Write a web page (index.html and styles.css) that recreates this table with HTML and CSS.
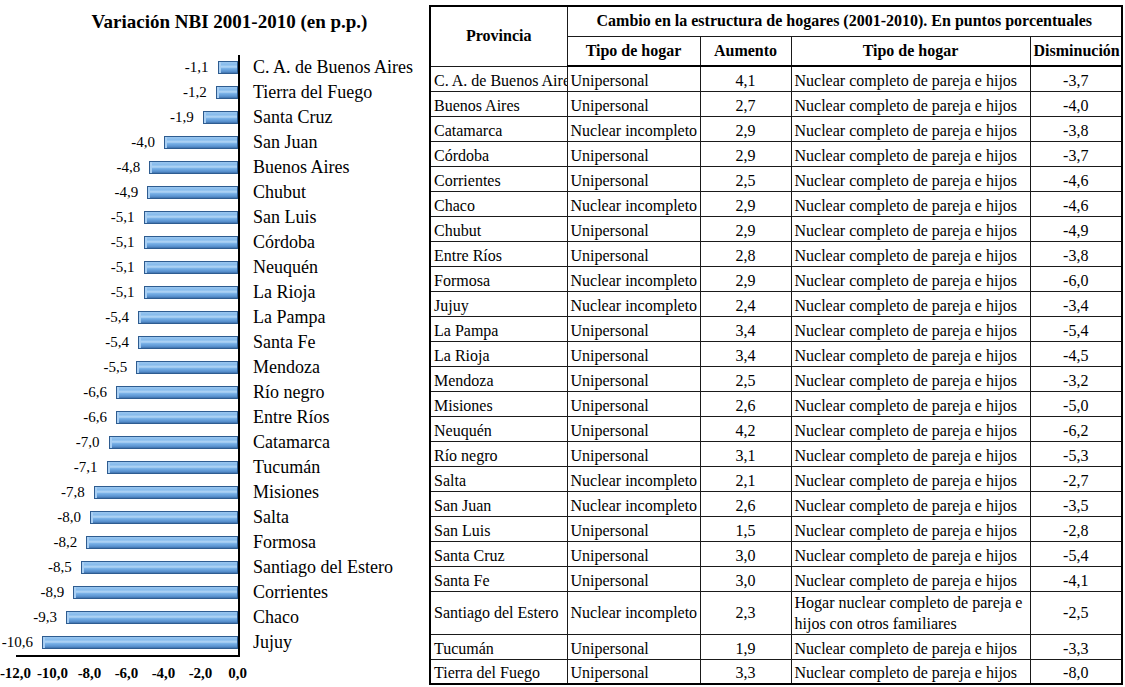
FILE: index.html
```html
<!DOCTYPE html>
<html lang="es">
<head>
<meta charset="utf-8">
<title>Variación NBI 2001-2010</title>
<link rel="stylesheet" href="styles.css">
</head>
<body>
<div class="page">
  <section class="chart">
    <h2 class="chart-title">Variación NBI 2001-2010 (en p.p.)</h2>
    <div class="plot">
      <div class="bars">
        <div class="row"><span class="val">-1,1</span><span class="bar" style="width:20.4px"></span></div>
        <div class="row"><span class="val">-1,2</span><span class="bar" style="width:22.2px"></span></div>
        <div class="row"><span class="val">-1,9</span><span class="bar" style="width:35.2px"></span></div>
        <div class="row"><span class="val">-4,0</span><span class="bar" style="width:74px"></span></div>
        <div class="row"><span class="val">-4,8</span><span class="bar" style="width:88.8px"></span></div>
        <div class="row"><span class="val">-4,9</span><span class="bar" style="width:90.7px"></span></div>
        <div class="row"><span class="val">-5,1</span><span class="bar" style="width:94.4px"></span></div>
        <div class="row"><span class="val">-5,1</span><span class="bar" style="width:94.4px"></span></div>
        <div class="row"><span class="val">-5,1</span><span class="bar" style="width:94.4px"></span></div>
        <div class="row"><span class="val">-5,1</span><span class="bar" style="width:94.4px"></span></div>
        <div class="row"><span class="val">-5,4</span><span class="bar" style="width:99.9px"></span></div>
        <div class="row"><span class="val">-5,4</span><span class="bar" style="width:99.9px"></span></div>
        <div class="row"><span class="val">-5,5</span><span class="bar" style="width:101.8px"></span></div>
        <div class="row"><span class="val">-6,6</span><span class="bar" style="width:122.1px"></span></div>
        <div class="row"><span class="val">-6,6</span><span class="bar" style="width:122.1px"></span></div>
        <div class="row"><span class="val">-7,0</span><span class="bar" style="width:129.5px"></span></div>
        <div class="row"><span class="val">-7,1</span><span class="bar" style="width:131.4px"></span></div>
        <div class="row"><span class="val">-7,8</span><span class="bar" style="width:144.3px"></span></div>
        <div class="row"><span class="val">-8,0</span><span class="bar" style="width:148px"></span></div>
        <div class="row"><span class="val">-8,2</span><span class="bar" style="width:151.7px"></span></div>
        <div class="row"><span class="val">-8,5</span><span class="bar" style="width:157.3px"></span></div>
        <div class="row"><span class="val">-8,9</span><span class="bar" style="width:164.7px"></span></div>
        <div class="row"><span class="val">-9,3</span><span class="bar" style="width:172.1px"></span></div>
        <div class="row"><span class="val">-10,6</span><span class="bar" style="width:196.1px"></span></div>
      </div>
      <ul class="cats">
        <li>C. A. de Buenos Aires</li>
        <li>Tierra del Fuego</li>
        <li>Santa Cruz</li>
        <li>San Juan</li>
        <li>Buenos Aires</li>
        <li>Chubut</li>
        <li>San Luis</li>
        <li>Córdoba</li>
        <li>Neuquén</li>
        <li>La Rioja</li>
        <li>La Pampa</li>
        <li>Santa Fe</li>
        <li>Mendoza</li>
        <li>Río negro</li>
        <li>Entre Ríos</li>
        <li>Catamarca</li>
        <li>Tucumán</li>
        <li>Misiones</li>
        <li>Salta</li>
        <li>Formosa</li>
        <li>Santiago del Estero</li>
        <li>Corrientes</li>
        <li>Chaco</li>
        <li>Jujuy</li>
      </ul>
    </div>
    <div class="xaxis"></div>
    <div class="ticks">
      <span>-12,0</span><span>-10,0</span><span>-8,0</span><span>-6,0</span><span>-4,0</span><span>-2,0</span><span>0,0</span>
    </div>
  </section>

  <table class="data">
    <colgroup>
      <col class="c1"><col class="c2"><col class="c3"><col class="c4"><col class="c5">
    </colgroup>
    <thead>
      <tr class="h1">
        <th rowspan="2">Provincia</th>
        <th colspan="4">Cambio en la estructura de hogares (2001-2010). En puntos porcentuales</th>
      </tr>
      <tr class="h2">
        <th>Tipo de hogar</th>
        <th>Aumento</th>
        <th>Tipo de hogar</th>
        <th>Disminución</th>
      </tr>
    </thead>
    <tbody>
      <tr><td class="prov">C. A. de Buenos Aires</td><td>Unipersonal</td><td class="num">4,1</td><td>Nuclear completo de pareja e hijos</td><td class="num">-3,7</td></tr>
      <tr><td class="prov">Buenos Aires</td><td>Unipersonal</td><td class="num">2,7</td><td>Nuclear completo de pareja e hijos</td><td class="num">-4,0</td></tr>
      <tr><td class="prov">Catamarca</td><td>Nuclear incompleto</td><td class="num">2,9</td><td>Nuclear completo de pareja e hijos</td><td class="num">-3,8</td></tr>
      <tr><td class="prov">Córdoba</td><td>Unipersonal</td><td class="num">2,9</td><td>Nuclear completo de pareja e hijos</td><td class="num">-3,7</td></tr>
      <tr><td class="prov">Corrientes</td><td>Unipersonal</td><td class="num">2,5</td><td>Nuclear completo de pareja e hijos</td><td class="num">-4,6</td></tr>
      <tr><td class="prov">Chaco</td><td>Nuclear incompleto</td><td class="num">2,9</td><td>Nuclear completo de pareja e hijos</td><td class="num">-4,6</td></tr>
      <tr><td class="prov">Chubut</td><td>Unipersonal</td><td class="num">2,9</td><td>Nuclear completo de pareja e hijos</td><td class="num">-4,9</td></tr>
      <tr><td class="prov">Entre Ríos</td><td>Unipersonal</td><td class="num">2,8</td><td>Nuclear completo de pareja e hijos</td><td class="num">-3,8</td></tr>
      <tr><td class="prov">Formosa</td><td>Nuclear incompleto</td><td class="num">2,9</td><td>Nuclear completo de pareja e hijos</td><td class="num">-6,0</td></tr>
      <tr><td class="prov">Jujuy</td><td>Nuclear incompleto</td><td class="num">2,4</td><td>Nuclear completo de pareja e hijos</td><td class="num">-3,4</td></tr>
      <tr><td class="prov">La Pampa</td><td>Unipersonal</td><td class="num">3,4</td><td>Nuclear completo de pareja e hijos</td><td class="num">-5,4</td></tr>
      <tr><td class="prov">La Rioja</td><td>Unipersonal</td><td class="num">3,4</td><td>Nuclear completo de pareja e hijos</td><td class="num">-4,5</td></tr>
      <tr><td class="prov">Mendoza</td><td>Unipersonal</td><td class="num">2,5</td><td>Nuclear completo de pareja e hijos</td><td class="num">-3,2</td></tr>
      <tr><td class="prov">Misiones</td><td>Unipersonal</td><td class="num">2,6</td><td>Nuclear completo de pareja e hijos</td><td class="num">-5,0</td></tr>
      <tr><td class="prov">Neuquén</td><td>Unipersonal</td><td class="num">4,2</td><td>Nuclear completo de pareja e hijos</td><td class="num">-6,2</td></tr>
      <tr><td class="prov">Río negro</td><td>Unipersonal</td><td class="num">3,1</td><td>Nuclear completo de pareja e hijos</td><td class="num">-5,3</td></tr>
      <tr><td class="prov">Salta</td><td>Nuclear incompleto</td><td class="num">2,1</td><td>Nuclear completo de pareja e hijos</td><td class="num">-2,7</td></tr>
      <tr><td class="prov">San Juan</td><td>Nuclear incompleto</td><td class="num">2,6</td><td>Nuclear completo de pareja e hijos</td><td class="num">-3,5</td></tr>
      <tr><td class="prov">San Luis</td><td>Unipersonal</td><td class="num">1,5</td><td>Nuclear completo de pareja e hijos</td><td class="num">-2,8</td></tr>
      <tr><td class="prov">Santa Cruz</td><td>Unipersonal</td><td class="num">3,0</td><td>Nuclear completo de pareja e hijos</td><td class="num">-5,4</td></tr>
      <tr><td class="prov">Santa Fe</td><td>Unipersonal</td><td class="num">3,0</td><td>Nuclear completo de pareja e hijos</td><td class="num">-4,1</td></tr>
      <tr class="tall"><td class="prov">Santiago del Estero</td><td>Nuclear incompleto</td><td class="num">2,3</td><td class="wrap">Hogar nuclear completo de pareja e hijos con otros familiares</td><td class="num">-2,5</td></tr>
      <tr><td class="prov">Tucumán</td><td>Unipersonal</td><td class="num">1,9</td><td>Nuclear completo de pareja e hijos</td><td class="num">-3,3</td></tr>
      <tr><td class="prov">Tierra del Fuego</td><td>Unipersonal</td><td class="num">3,3</td><td>Nuclear completo de pareja e hijos</td><td class="num">-8,0</td></tr>
    </tbody>
  </table>
</div>
</body>
</html>
```

FILE: styles.css
```css
* { box-sizing: border-box; }

html, body {
  margin: 0;
  padding: 0;
  background: #ffffff;
}

body {
  font-family: "Liberation Serif", "Times New Roman", serif;
  color: #000;
}

.page {
  display: flex;
  align-items: flex-start;
  width: 1125px;
  height: 687px;
  overflow: hidden;
}

/* ---------- chart ---------- */
.chart {
  width: 429px;
  flex: none;
}

.chart-title {
  margin: 0;
  padding: 11px 0 0 30px;
  height: 55px;
  text-align: center;
  font-size: 19px;
  font-weight: bold;
  line-height: 22px;
  white-space: nowrap;
}

.plot {
  display: flex;
  height: 600px;
}

.bars {
  width: 240px;
  flex: none;
  border-right: 2px solid #000;
}

.row {
  height: 25px;
  display: flex;
  align-items: center;
  justify-content: flex-end;
}

.val {
  font-size: 15px;
  line-height: 17px;
  margin-right: 9px;
}

.bar {
  height: 13px;
  border: 1px solid #2e5c90;
  background: linear-gradient(to bottom,
    #9ac6ef 0%,
    #86bbec 25%,
    #b4d7f6 45%,
    #76afe6 60%,
    #5a93d0 85%,
    #3f71ab 100%);
  box-shadow: inset 2px 0 0 #a9cff3;
}

.cats {
  list-style: none;
  margin: 0;
  padding: 0 0 0 13px;
}

.cats li {
  height: 25px;
  line-height: 25px;
  font-size: 18px;
  white-space: nowrap;
}

.xaxis {
  margin-left: 16px;
  width: 224px;
  border-top: 2px solid #000;
}

.ticks {
  display: flex;
  margin-left: -3px;
  padding-top: 8px;
}

.ticks span {
  width: 37px;
  flex: none;
  text-align: center;
  font-size: 15px;
  font-weight: bold;
  line-height: 17px;
}

/* ---------- table ---------- */
.data {
  margin-top: 5px;
  width: 692px;
  table-layout: fixed;
  border-collapse: collapse;
  border: 2px solid #000;
  font-size: 16px;
}

.c1 { width: 137px; }
.c2 { width: 133px; }
.c3 { width: 91px; }
.c4 { width: 239px; }
.c5 { width: 92px; }

.data th,
.data td {
  border: 1px solid #1a1a1a;
  padding: 0 3px;
  line-height: 18px;
}

.data th {
  font-weight: bold;
  text-align: center;
  vertical-align: middle;
}

.data thead tr { height: 30px; }
.data thead tr.h2 th { border-bottom: 2px solid #000; }

.data tbody tr { height: 25px; }

.data td {
  vertical-align: bottom;
  padding-bottom: 1px;
  white-space: nowrap;
  overflow: hidden;
  text-align: left;
}

.data td.num { text-align: center; }

.data tr.tall { height: 43px; }
.data tr.tall td {
  vertical-align: middle;
  padding-bottom: 0;
}

.data td.wrap {
  white-space: normal;
  line-height: 21px;
}
```
